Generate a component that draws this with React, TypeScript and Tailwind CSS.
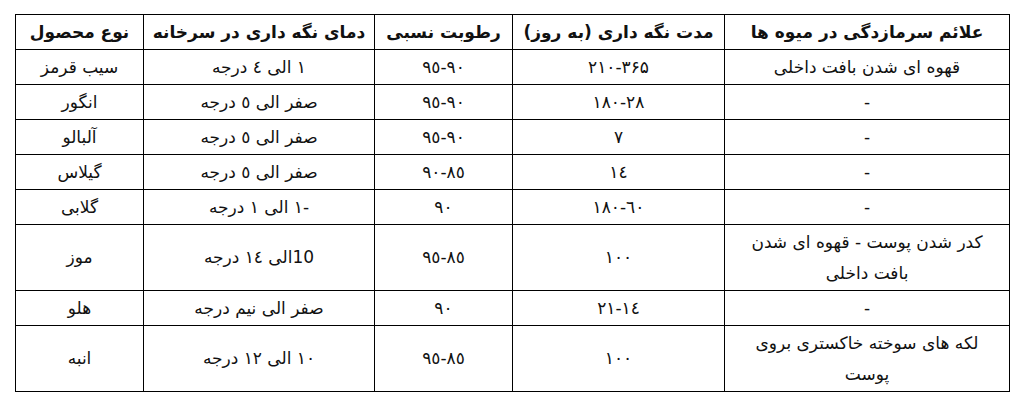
const headers = [
  "نوع محصول",
  "دمای نگه داری در سرخانه",
  "رطوبت نسبی",
  "مدت نگه داری (به روز)",
  "علائم سرمازدگی در میوه ها",
];

// numeric columns (2 and 3) are written in visual order, left to right
const rows: string[][] = [
  ["سیب قرمز", "۱ الی ٤ درجه", "۹٥-۹۰", "۲۱۰-۳۶۵", "قهوه ای شدن بافت داخلی"],
  ["انگور", "صفر الی ٥ درجه", "۹٥-۹۰", "۱۸۰-۲۸", "-"],
  ["آلبالو", "صفر الی ٥ درجه", "۹٥-۹۰", "۷", "-"],
  ["گیلاس", "صفر الی ٥ درجه", "۹۰-۸٥", "۱٤", "-"],
  ["گلابی", "-۱ الی ۱ درجه", "۹۰", "۱۸۰-٦۰", "-"],
  ["موز", "10الی ١٤ درجه", "۹٥-۸٥", "۱۰۰", "کدر شدن پوست - قهوه ای شدن بافت داخلی"],
  ["هلو", "صفر الی نیم درجه", "۹۰", "۲۱-۱٤", "-"],
  ["انبه", "۱۰ الی ۱۲ درجه", "۹٥-۸٥", "۱۰۰", "لکه های سوخته خاکستری بروی پوست"],
];

export default function App() {
  return (
    <div
      className="w-[1021px] h-[406px] bg-white pl-[15px] pt-[14px]"
      style={{ fontFamily: '"DejaVu Sans", "Noto Sans", sans-serif' }}
    >
      <table className="table-fixed border-collapse w-[994px] text-[#111]">
        <colgroup>
          <col className="w-[128px]" />
          <col className="w-[231px]" />
          <col className="w-[138px]" />
          <col className="w-[212px]" />
          <col className="w-[285px]" />
        </colgroup>
        <thead>
          <tr>
            {headers.map((h) => (
              <th
                key={h}
                dir="rtl"
                className="border border-black text-center font-bold text-[17px] leading-[34px] py-0 px-2"
              >
                {h}
              </th>
            ))}
          </tr>
        </thead>
        <tbody>
          {rows.map((r, i) => (
            <tr key={i}>
              {r.map((c, j) => (
                <td
                  key={j}
                  dir="rtl"
                  className="border border-black text-center text-[17px] leading-[31px] py-[1.5px] px-3"
                >
                  {j === 2 || j === 3 ? (
                    <span dir="ltr" className="[unicode-bidi:bidi-override]">
                      {c}
                    </span>
                  ) : (
                    c
                  )}
                </td>
              ))}
            </tr>
          ))}
        </tbody>
      </table>
    </div>
  );
}
